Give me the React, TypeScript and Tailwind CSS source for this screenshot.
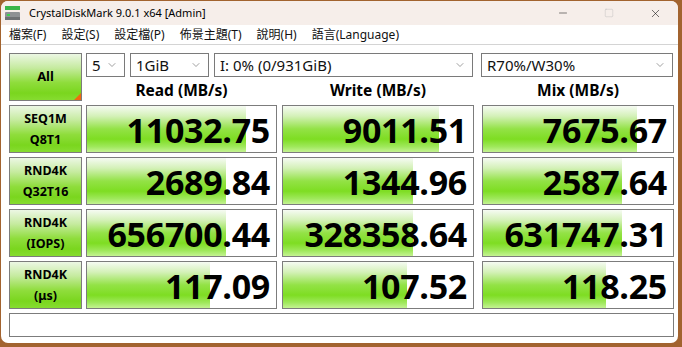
import React from 'react';
import { ChevronDown, Minus, Square, X } from 'lucide-react';

const ui = "font-['Segoe_UI','Noto_Sans','Noto_Sans_CJK_TC',sans-serif]";
const num = "font-['Open_Sans','Noto_Sans',sans-serif]";

const barBg = 'bg-[linear-gradient(to_bottom,#f6fbf3_0%,#d4f1b8_22%,#93e246_50%,#7edd22_72%,#9ee85a_88%,#c4f392_100%)]';
const labelBg = 'bg-[linear-gradient(to_bottom,#ecf7e4_0%,#c6eba0_30%,#8fdd3c_62%,#7ad61e_85%,#86dc30_100%)]';

const menus = ['檔案(F)', '設定(S)', '設定檔(P)', '佈景主題(T)', '說明(H)', '語言(Language)'];

interface RowData {
  label: [string, string];
  values: [string, string, string];
  fills: [number, number, number];
}

const rows: RowData[] = [
  { label: ['SEQ1M', 'Q8T1'], values: ['11032.75', '9011.51', '7675.67'], fills: [159, 156, 154] },
  { label: ['RND4K', 'Q32T16'], values: ['2689.84', '1344.96', '2587.64'], fills: [139, 130, 139] },
  { label: ['RND4K', '(IOPS)'], values: ['656700.44', '328358.64', '631747.31'], fills: [139, 130, 139] },
  { label: ['RND4K', '(μs)'], values: ['117.09', '107.52', '118.25'], fills: [123, 124, 123] },
];

const AppIcon = () => (
  <svg width="15" height="16" viewBox="0 0 15 16">
    <rect x="0" y="1" width="15" height="4" fill="#39b54a" />
    <rect x="0" y="7" width="15" height="8" rx="1" fill="#8e9194" />
    <rect x="0" y="12" width="15" height="3" fill="#6e7174" />
    <rect x="2" y="9" width="3" height="2" fill="#3fd04f" />
  </svg>
);

const Combo: React.FC<{ text: string; className: string }> = ({ text, className }) => (
  <div className={`h-[24px] border border-[#7a7a7a] bg-white flex items-center justify-between pl-[5px] pr-[6px] ${className}`}>
    <span className="text-[15px] text-[#111] leading-none">{text}</span>
    <ChevronDown size={12} strokeWidth={1.4} className="text-[#777]" />
  </div>
);

const ValueBox: React.FC<{ value: string; fill: number; className?: string }> = ({ value, fill, className = '' }) => (
  <div className={`relative h-[48px] border border-[#7c7c7c] bg-white overflow-hidden ${className}`}>
    <div className={`absolute left-0 top-0 bottom-0 ${barBg}`} style={{ width: fill }} />
    <div className={`relative h-full flex items-center justify-end pr-[6px] pt-[2px] ${num} text-[34px] font-bold text-black tracking-[-0.3px]`}>
      {value}
    </div>
  </div>
);

export default function App() {
  return (
    <div className={`w-[682px] h-[347px] bg-[#a2632f] overflow-hidden ${ui}`}>
      <div className="ml-[1px] mt-[1px] w-[677px] h-[342px] rounded-[7px] overflow-hidden bg-white flex flex-col">
        {/* title bar */}
        <div className="h-[24px] bg-[#f6eeea] flex items-center">
          <div className="ml-[4px] w-[15px] flex"><AppIcon /></div>
          <span className="ml-[9px] text-[11px] text-black">CrystalDiskMark 9.0.1 x64 [Admin]</span>
          <div className="ml-auto flex items-center h-full">
            <div className="w-[46px] flex justify-center"><Minus size={12} strokeWidth={1} className="text-black" /></div>
            <div className="w-[46px] flex justify-center"><Square size={10} strokeWidth={1} className="text-[#b8b8b8]" /></div>
            <div className="w-[46px] flex justify-center"><X size={13} strokeWidth={1} className="text-black" /></div>
          </div>
        </div>
        {/* menu */}
        <div className="h-[20px] bg-white flex items-center pl-[8px] gap-[15px] border-b border-[#d4d4d4] text-[12px] text-[#111]">
          {menus.map((m) => (
            <span key={m}>{m}</span>
          ))}
        </div>
        {/* client */}
        <div className="flex-1 pt-[8px] pl-[8px] flex flex-col gap-[4px]">
          <div className="flex h-[48px]">
            <div className={`relative w-[73px] h-[48px] border border-[#7c7c7c] ${labelBg} flex items-center justify-center`}>
              <span className="text-[13px] font-bold text-black">All</span>
              <div className="absolute right-0 bottom-0 w-0 h-0 border-l-[7px] border-l-transparent border-b-[7px] border-b-[#f06a10]" />
            </div>
            <div className="flex flex-col">
              <div className="flex h-[24px]">
                <Combo text="5" className="ml-[4px] w-[39px]" />
                <Combo text="1GiB" className="ml-[5px] w-[79px]" />
                <Combo text="I: 0% (0/931GiB)" className="ml-[5px] w-[259px]" />
                <Combo text="R70%/W30%" className="ml-[8px] w-[192px]" />
              </div>
              <div className="flex h-[24px] items-center pt-[4px] text-[15.5px] font-bold text-black">
                <div className="ml-[4px] w-[191px] text-center">Read (MB/s)</div>
                <div className="ml-[5px] w-[192px] text-center">Write (MB/s)</div>
                <div className="ml-[8px] w-[192px] text-center">Mix (MB/s)</div>
              </div>
            </div>
          </div>
          {rows.map((r, i) => (
            <div key={i} className="flex h-[48px]">
              <div className={`w-[73px] h-[48px] border border-[#7c7c7c] ${labelBg} flex flex-col items-center justify-center gap-[4px] text-[12.5px] font-bold text-black leading-[17px]`}>
                <span>{r.label[0]}</span>
                <span>{r.label[1]}</span>
              </div>
              <ValueBox value={r.values[0]} fill={r.fills[0]} className="ml-[4px] w-[191px]" />
              <ValueBox value={r.values[1]} fill={r.fills[1]} className="ml-[5px] w-[192px]" />
              <ValueBox value={r.values[2]} fill={r.fills[2]} className="ml-[8px] w-[192px]" />
            </div>
          ))}
          <div className="w-[665px] h-[24px] border border-[#7c7c7c] bg-white" />
        </div>
      </div>
    </div>
  );
}
